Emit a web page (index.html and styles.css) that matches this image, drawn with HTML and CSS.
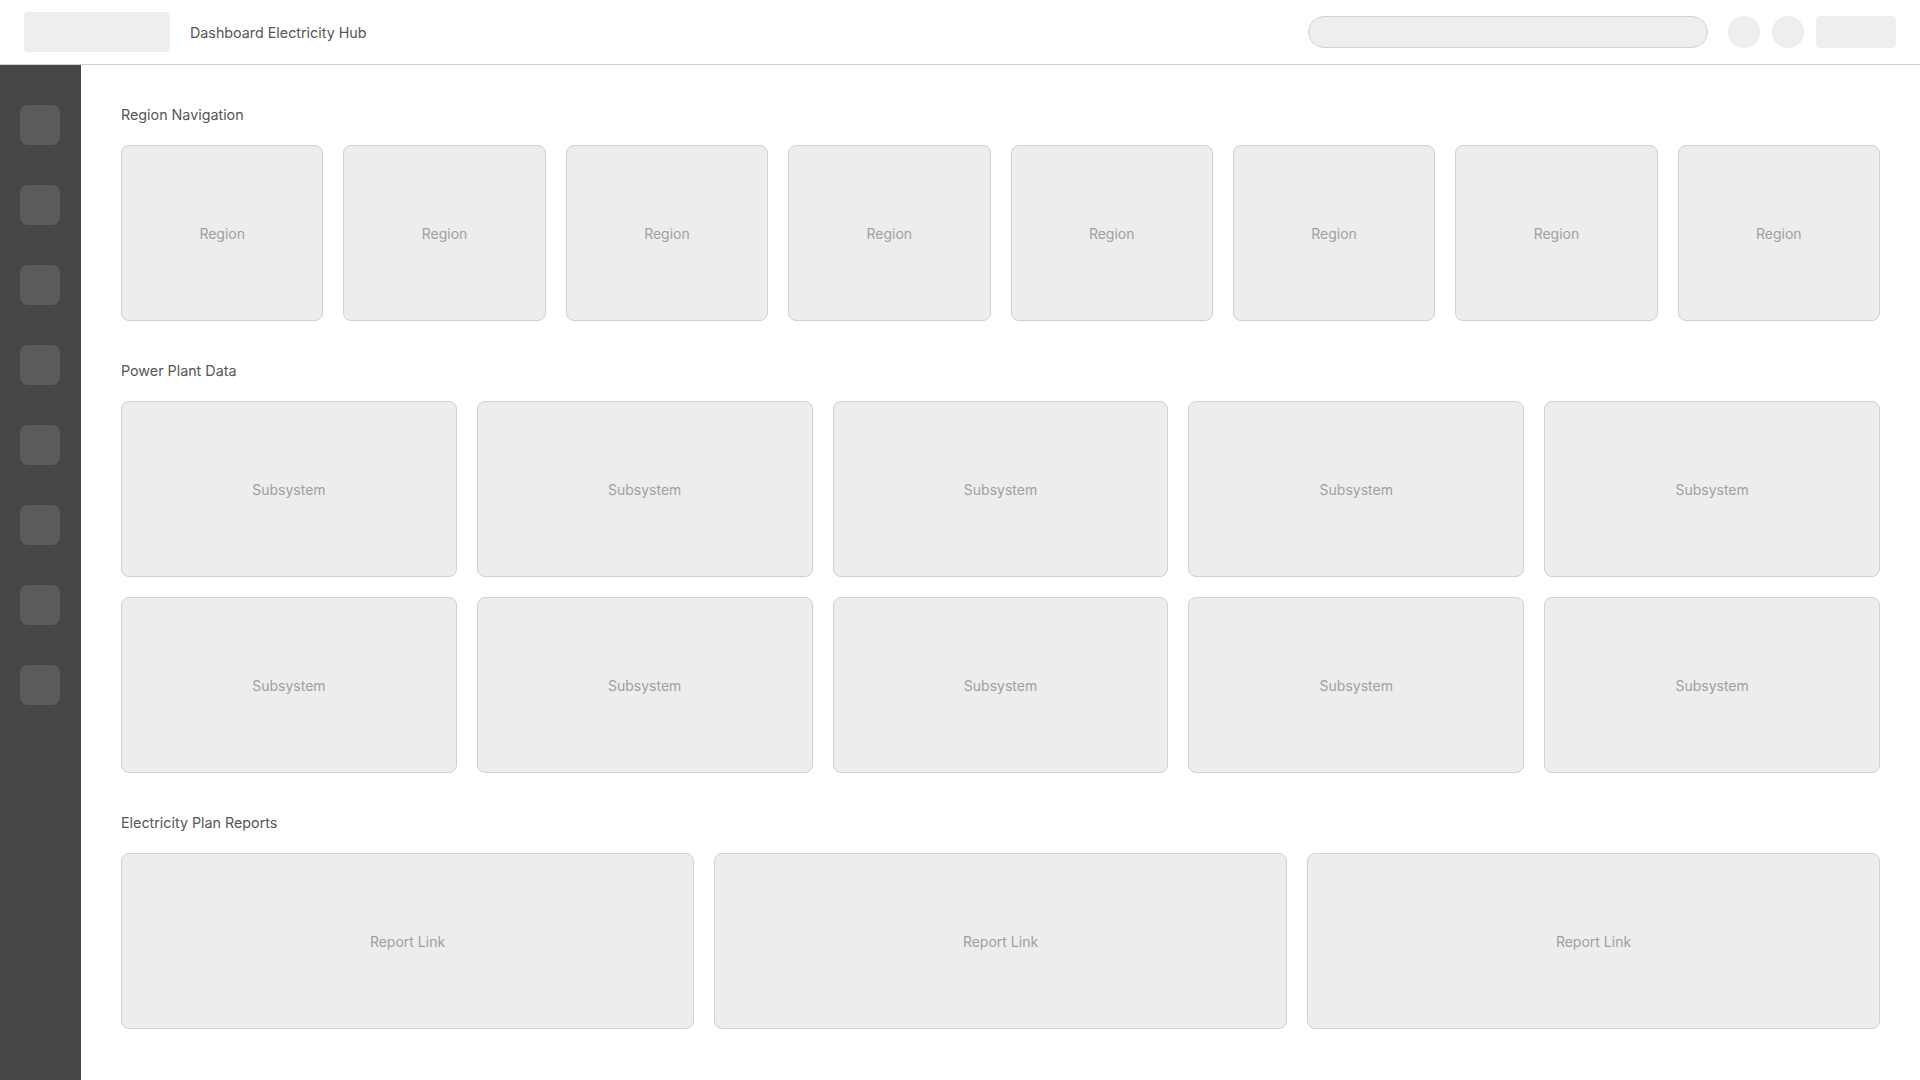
FILE: index.html
```html
<!DOCTYPE html>
<html lang="en">
<head>
  <meta charset="UTF-8" />
  <meta name="viewport" content="width=device-width, initial-scale=1.0"/>
  <title>Dashboard Electricity Hub</title>
  <link rel="stylesheet" href="styles.css">
</head>
<body>
  <header class="topbar">
    <div class="logo"></div>
    <div class="title">Dashboard Electricity Hub</div>
    <div class="topbar-right">
      <div class="search"></div>
      <div class="avatar"></div>
      <div class="avatar"></div>
      <div class="action"></div>
    </div>
  </header>

  <div class="layout">
    <nav class="sidebar">
      <div class="nav-item"></div>
      <div class="nav-item"></div>
      <div class="nav-item"></div>
      <div class="nav-item"></div>
      <div class="nav-item"></div>
      <div class="nav-item"></div>
      <div class="nav-item"></div>
      <div class="nav-item"></div>
    </nav>

    <main class="content">
      <section class="section">
        <h2>Region Navigation</h2>
        <div class="grid grid-8">
          <div class="card">Region</div>
          <div class="card">Region</div>
          <div class="card">Region</div>
          <div class="card">Region</div>
          <div class="card">Region</div>
          <div class="card">Region</div>
          <div class="card">Region</div>
          <div class="card">Region</div>
        </div>
      </section>

      <section class="section">
        <h2>Power Plant Data</h2>
        <div class="grid grid-5">
          <div class="card">Subsystem</div>
          <div class="card">Subsystem</div>
          <div class="card">Subsystem</div>
          <div class="card">Subsystem</div>
          <div class="card">Subsystem</div>
          <div class="card">Subsystem</div>
          <div class="card">Subsystem</div>
          <div class="card">Subsystem</div>
          <div class="card">Subsystem</div>
          <div class="card">Subsystem</div>
        </div>
      </section>

      <section class="section">
        <h2>Electricity Plan Reports</h2>
        <div class="grid grid-3">
          <div class="card">Report Link</div>
          <div class="card">Report Link</div>
          <div class="card">Report Link</div>
        </div>
      </section>
    </main>
  </div>
</body>
</html>
```

FILE: styles.css
```css
body {
  font-family: 'Inter', 'Liberation Sans', sans-serif;
  margin: 0;
  background-color: #fff;
  color: #555;
  min-height: 100vh;
  display: flex;
  flex-direction: column;
}
.topbar {
  height: 64px;
  border-bottom: 1px solid #cfcfcf;
  display: flex;
  align-items: center;
  padding: 0 24px;
  flex-shrink: 0;
}
.logo {
  width: 146px;
  height: 40px;
  background-color: #eee;
  border-radius: 4px;
}
.title {
  margin-left: 20px;
  font-size: 14.3px;
  color: #555;
}
.topbar-right {
  margin-left: auto;
  display: flex;
  align-items: center;
  gap: 12px;
}
.search {
  width: 398px;
  height: 30px;
  border: 1px solid #d2d2d2;
  border-radius: 16px;
  background-color: #eee;
  margin-right: 8px;
}
.avatar {
  width: 32px;
  height: 32px;
  border-radius: 50%;
  background-color: #eee;
}
.action {
  width: 80px;
  height: 32px;
  border-radius: 4px;
  background-color: #eee;
}
.layout {
  flex: 1;
  display: flex;
}
.sidebar {
  width: 81px;
  background-color: #464646;
  padding: 40px 20px;
  box-sizing: border-box;
  display: flex;
  flex-direction: column;
  gap: 40px;
  flex-shrink: 0;
}
.nav-item {
  width: 40px;
  height: 40px;
  border-radius: 8px;
  background-color: #5b5b5b;
}
.content {
  flex: 1;
  padding: 40px;
}
.section {
  margin-bottom: 40px;
}
.section h2 {
  font-size: 14.3px;
  font-weight: 400;
  line-height: 20px;
  color: #555;
  margin: 0 0 20px 0;
}
.grid {
  display: grid;
  gap: 20px;
}
.grid-8 {
  grid-template-columns: repeat(8, 1fr);
}
.grid-5 {
  grid-template-columns: repeat(5, 1fr);
}
.grid-3 {
  grid-template-columns: repeat(3, 1fr);
}
.card {
  height: 176px;
  box-sizing: border-box;
  background-color: #ededed;
  border: 1px solid #d0d0d0;
  border-radius: 8px;
  display: flex;
  align-items: center;
  justify-content: center;
  font-size: 14px;
  color: #a0a0a0;
}
```
